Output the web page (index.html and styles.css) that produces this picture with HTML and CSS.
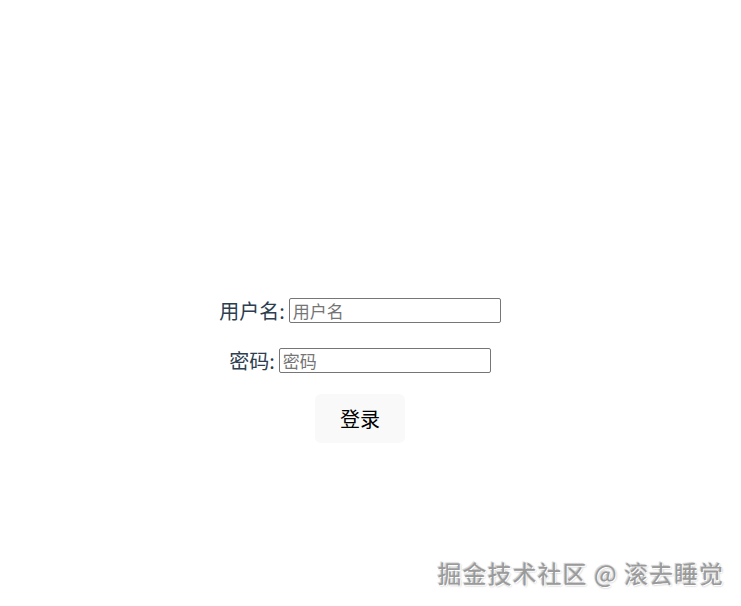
FILE: index.html
```html
<!DOCTYPE html>
<html lang="zh">
<head>
<meta charset="utf-8">
<link rel="stylesheet" href="styles.css">
</head>
<body>
<div class="page">
  <form class="login">
    <div class="row">
      <label class="label" for="u">用户名:</label>
      <input class="field" id="u" type="text" placeholder="用户名">
    </div>
    <div class="row">
      <label class="label" for="p">密码:</label>
      <input class="field" id="p" type="password" placeholder="密码">
    </div>
    <button class="btn" type="button">登录</button>
  </form>
  <div class="watermark">掘金技术社区 @ 滚去睡觉</div>
</div>
</body>
</html>
```
FILE: styles.css
```css
html, body {
  margin: 0;
  padding: 0;
  background: #ffffff;
}
body {
  font-family: "Noto Sans CJK SC", "Noto Sans", sans-serif;
}
.page {
  width: 720px;
  height: 606px;
  display: flex;
  flex-direction: column;
  align-items: center;
}
.login {
  margin-top: 298px;
  display: flex;
  flex-direction: column;
  align-items: center;
  gap: 25px;
}
.row {
  display: flex;
  align-items: center;
  gap: 4px;
  height: 25px;
}
.label {
  font-size: 20px;
  color: #2c3e50;
  line-height: 25px;
}
.field {
  box-sizing: border-box;
  width: 212px;
  height: 25px;
  border: 1px solid #767676;
  border-radius: 2px;
  padding: 0 3px;
  font-family: "Noto Sans CJK SC", sans-serif;
  font-size: 17px;
  color: #333;
  outline: none;
}
.field::placeholder {
  color: #757575;
}
.btn {
  margin-top: -4px;
  width: 90px;
  height: 49px;
  border: none;
  border-radius: 6px;
  background: #f9f9f9;
  font-family: "Noto Sans CJK SC", sans-serif;
  font-size: 20px;
  color: #000;
  cursor: pointer;
}
.watermark {
  align-self: flex-end;
  margin-top: auto;
  margin-bottom: 16px;
  margin-right: -4px;
  font-size: 24px;
  color: #9a9a9a;
  letter-spacing: 1px;
  text-shadow: 1px 1px 0 #ffffff, -1px -1px 1px rgba(0,0,0,0.2), 1px 1px 2px rgba(0,0,0,0.35);
}
```
